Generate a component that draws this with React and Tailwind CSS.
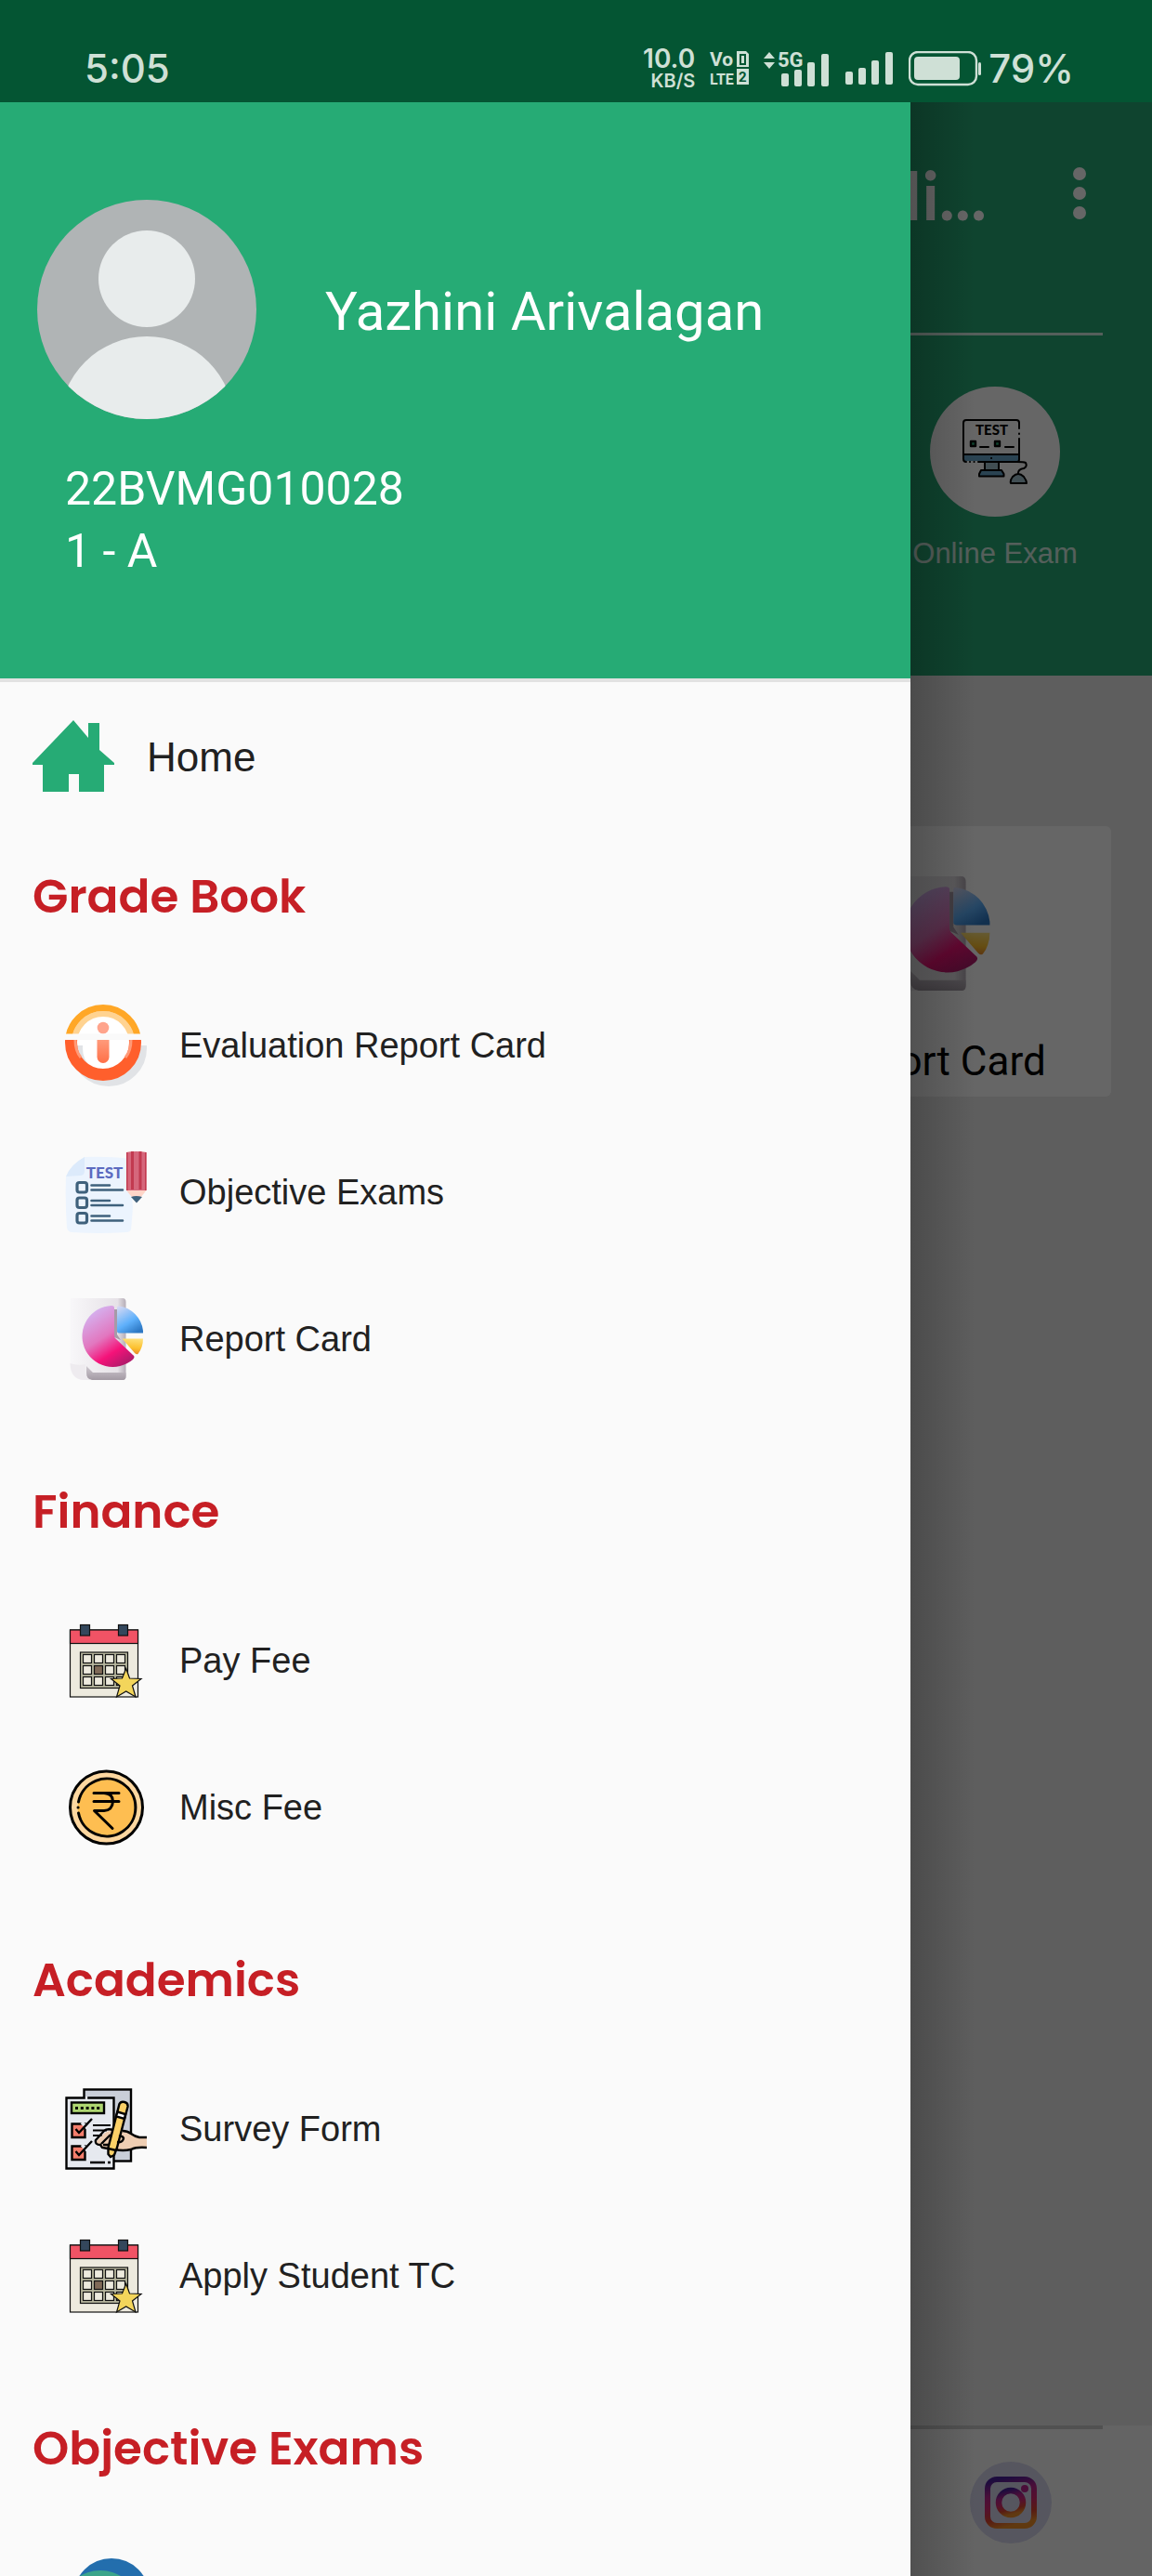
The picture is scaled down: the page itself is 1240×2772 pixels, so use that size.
import { useState } from "react";

function HomeIcon() {
  return (
    <svg viewBox="0 0 88 88" className="size-[88px] shrink-0" fill="#26ab75">
      <path d="M44 4 L60 23 V7 H72 V36 L88 50 V52 H77 V81 H50 V62 H39 V81 H11 V52 H0 V50 Z" />
    </svg>
  );
}

function InfoIcon() {
  return (
    <svg viewBox="0 0 88 88" className="size-[88px] shrink-0">
      <defs>
        <linearGradient id="stem" x1="0" y1="0" x2="0" y2="1">
          <stop offset="0" stopColor="#ff9a7b" />
          <stop offset="1" stopColor="#ff7048" />
        </linearGradient>
        <clipPath id="top">
          <rect width="88" height="31.5" />
        </clipPath>
        <clipPath id="bottom">
          <rect y="38" width="88" height="50" />
        </clipPath>
        <clipPath id="shade">
          <rect y="44" width="88" height="44" />
        </clipPath>
      </defs>
      <circle cx="41" cy="41" r="34" fill="#fff" />
      <circle cx="47" cy="47" r="34.5" fill="none" stroke="#e1e3e6" strokeWidth="13" clipPath="url(#shade)" />
      <path d="M0 31.5 H82 V38 H0 Z" fill="#fafafa" />
      <g clipPath="url(#top)" fill="none">
        <circle cx="41" cy="41" r="31" stroke="#ffd391" strokeWidth="6" />
        <circle cx="41" cy="41" r="37.5" stroke="#ffa726" strokeWidth="7" />
      </g>
      <g clipPath="url(#bottom)" fill="none">
        <circle cx="41" cy="41" r="34.5" stroke="#ff5f2c" strokeWidth="13" />
        <path d="M11 38 Q11 50 17 57" stroke="#ff9a78" strokeWidth="3" />
        <path d="M71 38 Q71 50 65 57" stroke="#ff9a78" strokeWidth="3" />
      </g>
      <circle cx="41" cy="25" r="6.3" fill="#ffa48c" />
      <path d="M34.5 38 H47.5 V56.5 A6.5 6.5 0 0 1 34.5 56.5 Z" fill="url(#stem)" />
    </svg>
  );
}

function TestPaperIcon() {
  return (
    <svg viewBox="0 0 88 88" className="size-[88px] shrink-0">
      <path d="M21 6 Q45 5 73 8 Q71 45 73 60 Q72 74 71 84 Q70 87 66 87 Q36 89 8 87 Q3 87 2 82 Q0 55 1 27 Z" fill="#ecf4fe" />
      <path d="M21 6 V21 Q21 26 16 26 L1 27 Q6 14 21 6 Z" fill="#dceafb" />
      <text x="42.5" y="28.5" textAnchor="middle" fontFamily="Lato, sans-serif" fontWeight="900" fontSize="17" fill="#5c6bc0">
        TEST
      </text>
      {[0, 16.5, 33].map((dy) => (
        <g key={dy} fill="none" stroke="#3f617c" strokeLinecap="round">
          <rect x="13" y={33.5 + dy} width="10.5" height="10.5" rx="2.5" strokeWidth="3.2" />
          <path d={`M28.5 ${36.5 + dy} H48 M28.5 ${41.5 + dy} H62`} strokeWidth="2.6" />
        </g>
      ))}
      <path d="M66 1 Q76 -1 87.5 1 V42 L77 55 L66 42 Z" fill="#ffd5c8" />
      <path d="M66 1 Q76 -1 87.5 1 V42 H66 Z" fill="#d5677c" />
      <path d="M71 0 h3 v41 h-3z M79.5 0 h3 v41 h-3z M66 1 h1.5 v41 h-1.5z M86 1 h1.5 v41 h-1.5z" fill="#c23a50" />
      <path d="M71 49 Q76.5 47 83 49 L77 55.5 Z" fill="#3f617c" />
    </svg>
  );
}

function PieReportIcon({ className }) {
  return (
    <svg viewBox="0 0 88 88" className={className}>
      <defs>
        <linearGradient id="paper" x1="0" y1="0" x2="1" y2="0">
          <stop offset="0" stopColor="#f8f7f9" />
          <stop offset="0.85" stopColor="#e6e2e7" />
          <stop offset="1" stopColor="#b5adb7" />
        </linearGradient>
        <linearGradient id="fold" x1="0" y1="0" x2="0" y2="1">
          <stop offset="0" stopColor="#cfc9d0" />
          <stop offset="1" stopColor="#a39aa4" />
        </linearGradient>
        <linearGradient id="pink" x1="0.2" y1="0.1" x2="0.7" y2="1">
          <stop offset="0" stopColor="#d5b0ee" />
          <stop offset="0.45" stopColor="#e277bf" />
          <stop offset="0.75" stopColor="#f51279" />
          <stop offset="1" stopColor="#b51a6c" />
        </linearGradient>
        <linearGradient id="blue" x1="0.1" y1="0" x2="0.7" y2="1">
          <stop offset="0" stopColor="#d5d8f3" />
          <stop offset="0.6" stopColor="#5eb0fb" />
          <stop offset="1" stopColor="#2d78c4" />
        </linearGradient>
        <linearGradient id="amber" x1="0.6" y1="0" x2="0.5" y2="1">
          <stop offset="0" stopColor="#fde07a" />
          <stop offset="0.6" stopColor="#fcc02e" />
          <stop offset="1" stopColor="#e8862a" />
        </linearGradient>
      </defs>
      <path d="M8 0 H62 Q65.5 0 65.5 4 V84 Q65.5 88 62 88 H20 Q6 87 5.5 72 V3 Q5.5 0 8 0 Z" fill="url(#paper)" />
      <path d="M23 73 L30 80 H65.5 V84 Q65.5 88 62 88 H29 Q23 88 23 80 Z" fill="url(#fold)" />
      <path d="M5.5 70 Q14 73 22 71 V80 Q23 87 29 88 H20 Q6 87 5.5 70 Z" fill="#eeebef" />
      <path d="M53 12 L56 12 V39 L60 45 L53 42 Z" fill="#a79aa8" />
      <path d="M53 10 Q53 8 50 8 A33 33 0 1 0 73 66 Q76 63 73 61 L54 43 Q53 42 53 40 Z" fill="url(#pink)" />
      <path d="M56 10 Q56 8 58 8.5 A30 30 0 0 1 84 35 V37.5 H58 Q56 37.5 56 35.5 Z" fill="url(#blue)" />
      <path d="M61.5 43.5 H84 Q84 53 78.5 60 Q77 61 75 59 Z" fill="url(#amber)" />
    </svg>
  );
}

function CalendarIcon() {
  return (
    <svg viewBox="0 0 88 88" className="size-[88px] shrink-0" stroke="#111" strokeWidth="1.2">
      <rect x="5.5" y="11" width="73" height="72" fill="#edeade" />
      <rect x="5.5" y="11" width="73" height="14.5" fill="#f05365" />
      <rect x="16.5" y="5.5" width="10" height="11.5" fill="#34475c" />
      <rect x="57.5" y="5.5" width="10" height="11.5" fill="#34475c" />
      <rect x="16.5" y="35" width="51" height="38.5" fill="#b9b8a0" />
      {[37.5, 49.5, 61.5].map((y) =>
        [19.5, 31.5, 43.5, 55.5].map((x) => (
          <rect
            key={`${x}-${y}`}
            x={x}
            y={y}
            width="9"
            height="9"
            fill={x === 31.5 && y === 49.5 ? "#806a58" : "#edeade"}
          />
        ))
      )}
      <path
        d="M65.7 52.5 L69.5 63 L82 63.5 L72.5 71 L76 83 L65.7 77 L55.5 83 L59 71 L49.5 63.5 L61.5 63 Z"
        fill="#f3d55b"
      />
    </svg>
  );
}

function RupeeIcon() {
  return (
    <svg viewBox="0 0 88 88" className="size-[88px] shrink-0" fill="none" stroke="#000" strokeWidth="3" strokeLinecap="round" strokeLinejoin="round">
      <circle cx="44.5" cy="44" r="39" fill="#fdd7a0" />
      <circle cx="44.5" cy="44" r="31" fill="#febe51" stroke="none" />
      <path d="M14.5 38 A31 31 0 1 1 14.5 50" />
      <path d="M14 44 h0.1" />
      <path d="M31 28.5 H58 M31 37.5 H58 M31 28.5 H42 Q51.5 29 51.5 37.5 Q51 47 42 47.5 H31.5 L51 66.5" />
    </svg>
  );
}

function SurveyIcon() {
  return (
    <svg viewBox="0 0 88 88" className="size-[88px] shrink-0" fill="none" stroke="#000" strokeWidth="2.4">
      <rect x="20.5" y="1.5" width="50.5" height="77" fill="#c9ced8" />
      <path d="M1.5 10.5 H52.5 V86.5 H1.5 Z" fill="#e6e9ef" />
      <path d="M23 9 V12" stroke="#e6e9ef" />
      <rect x="7" y="15.5" width="35" height="11.5" fill="#aed671" />
      <path d="M11 21.5 H38" strokeWidth="3" strokeDasharray="3 2.8" />
      <path d="M7.5 38.5 H21.5 V53 H7.5 Z M7.5 62.5 H21.5 V77 H7.5 Z" fill="#f47e6c" />
      <path d="M18 37 L24 43 M18 61 L24 67" stroke="#e6e9ef" strokeWidth="3.5" />
      <path d="M11.5 44 L15 48 L29 33 M11.5 68 L15 72 L29 57" />
      <path d="M30 40 H49 M30 45.5 H45 M30 51 H40" strokeWidth="1.9" />
      <path d="M27 80 H43 M46 80 H49" />
      <path
        d="M89 53 H80 Q75 52 71 49 L64 46 H50 Q44 46 40 51 L33 58 Q34 62 39 61 L40 65 Q58 68 69 67 Q76 64 89 64 Z"
        fill="#efceb3"
        stroke="none"
      />
      <path d="M88 53 H80 Q75 52 71 49 Q67 46 62 46 M88 64 Q77 63 71 66 Q62 68 54 66 M46 65 L40 64 L38 61 Q32 61 33 56 L42 46 Q45 43 52 45 M39 60 L49 50 M41 61 H47" />
      <path d="M58.5 17 Q60 14 64 15 Q68 16 67.5 20 L56 64 L53 72 L49 74 L46.5 71 L46.5 64 Z" fill="#fbd067" />
      <path d="M56.5 25.5 L65 28 L64 33 L55 30.5 Z" fill="#fff" />
      <path d="M46.5 65 L55 67 M56 58 Q62 59 63 54 Q62 51 58 52" />
    </svg>
  );
}

function GlobeIcon() {
  return (
    <svg viewBox="0 0 88 88" className="size-[88px] shrink-0">
      <defs>
        <clipPath id="globe">
          <circle cx="50" cy="43" r="41" />
        </clipPath>
      </defs>
      <circle cx="50" cy="43" r="41" fill="#236ead" />
      <ellipse cx="38" cy="44" rx="36" ry="29" fill="#3ba58b" clipPath="url(#globe)" />
    </svg>
  );
}

function OnlineExamIcon() {
  return (
    <svg viewBox="0 0 70 70" className="size-[70px]" fill="none" stroke="#000" strokeWidth="2" strokeLinecap="round" strokeLinejoin="round">
      <path d="M1 38 H61 V45 H1 Z" fill="#69a9cc" stroke="none" />
      <path d="M61 10 V4 Q61 1 58 1 H4 Q1 1 1 4 V43 Q1 46 4 46 M17 46 H59 Q61 46 61 43 V21 M61 15.5 V16 M8 46 h0.1 M12.5 46 h0.1 M1 38 H61" />
      <path d="M31 42 h0.1" />
      <path d="M24 46 H39 V55 H24 Z" fill="#a3c3d0" />
      <path d="M20 55 H42 L44.5 59 V61.5 H18 V59 Z" fill="#69a9cc" />
      <path d="M52 69 Q51 66 54 62 Q60 56 66 62 Q69 66 69 69 Z" fill="#a3c3d0" />
      <path d="M60 58 Q60 54 66 53 Q70 51 68 47 Q66 46 59 46" />
      <path d="M9 24 h5 v5 h-5z M35 24 h5 v5 h-5z" fill="#26ab75" strokeWidth="2.4" />
      <path d="M19 30 H28 M46 30 H55" />
      <text x="31.5" y="17" textAnchor="middle" fontFamily="Lato, sans-serif" fontWeight="900" fontSize="15" fill="#000" stroke="none">
        TEST
      </text>
    </svg>
  );
}

function InstagramIcon() {
  return (
    <svg viewBox="0 0 88 88" className="size-[88px]" fill="none">
      <defs>
        <linearGradient id="insta" x1="0.25" y1="0" x2="0.5" y2="1">
          <stop offset="0" stopColor="#4a1f9c" />
          <stop offset="0.3" stopColor="#b8258f" />
          <stop offset="0.55" stopColor="#d52a72" />
          <stop offset="0.8" stopColor="#dc4630" />
          <stop offset="1" stopColor="#f0902a" />
        </linearGradient>
      </defs>
      <circle cx="44" cy="44" r="44" fill="#d7d7ee" />
      <rect x="19" y="19" width="50" height="50" rx="10" stroke="url(#insta)" strokeWidth="6" />
      <circle cx="44" cy="44" r="13" stroke="url(#insta)" strokeWidth="6.5" />
      <circle cx="59" cy="29" r="4" fill="#b8258f" />
    </svg>
  );
}

function VolteIcon() {
  return (
    <svg viewBox="0 0 42 38" className="h-[38px] w-[42px] overflow-visible" fill="#cfe0d6" fontFamily="Roboto, sans-serif" fontWeight="700">
      <text x="0" y="16" fontSize="21">Vo</text>
      <text x="0" y="36" fontSize="16">LTE</text>
      <path d="M29 0 H39 L42 3 V17 H29 Z M29 19 H42 V36 H29 Z" />
      <rect x="33" y="4" width="5" height="10" fill="none" stroke="#045533" strokeWidth="2" />
      <text x="31" y="33" fontSize="15" fill="#045533">2</text>
    </svg>
  );
}

function SignalBars() {
  return (
    <svg viewBox="0 0 52 36" className="h-[36px] w-[52px]" fill="#cfe0d6">
      <rect x="0" y="21" width="8" height="14" rx="2" />
      <rect x="14" y="17" width="8" height="18" rx="2" />
      <rect x="28" y="9" width="8" height="26" rx="2" />
      <rect x="43" y="0" width="8" height="35" rx="2" />
    </svg>
  );
}

function FiveGSignal() {
  return (
    <svg viewBox="0 0 72 38" className="h-[38px] w-[72px] overflow-visible" fill="#cfe0d6">
      <path d="M0 8 L6 1 L12 8 Z M0 12 H12 L6 19 Z" />
      <text x="15" y="17" fontFamily="Roboto, sans-serif" fontWeight="700" fontSize="22">
        5G
      </text>
      <rect x="19" y="24" width="8" height="14" rx="2" />
      <rect x="33" y="20" width="8" height="18" rx="2" />
      <rect x="47" y="12" width="8" height="26" rx="2" />
      <rect x="62" y="3" width="8" height="35" rx="2" />
    </svg>
  );
}

function BatteryIcon() {
  return (
    <svg viewBox="0 0 78 38" className="h-[38px] w-[78px]">
      <rect x="1" y="1" width="72" height="35" rx="9" fill="none" stroke="#cfe0d6" strokeWidth="2.4" />
      <rect x="6" y="6" width="49" height="25" rx="4" fill="#cfe0d6" />
      <rect x="75" y="12" width="3" height="14" rx="1.5" fill="#cfe0d6" />
    </svg>
  );
}

const groups = [
  {
    title: "Grade Book",
    items: [
      { label: "Evaluation Report Card", icon: <InfoIcon /> },
      { label: "Objective Exams", icon: <TestPaperIcon /> },
      { label: "Report Card", icon: <PieReportIcon className="size-[88px] shrink-0" /> },
    ],
  },
  {
    title: "Finance",
    items: [
      { label: "Pay Fee", icon: <CalendarIcon /> },
      { label: "Misc Fee", icon: <RupeeIcon /> },
    ],
  },
  {
    title: "Academics",
    items: [
      { label: "Survey Form", icon: <SurveyIcon /> },
      { label: "Apply Student TC", icon: <CalendarIcon /> },
    ],
  },
  {
    title: "Objective Exams",
    items: [{ label: "", icon: <GlobeIcon /> }],
  },
];

function StatusBar() {
  return (
    <div className="flex h-[110px] shrink-0 items-end justify-between bg-[#045533] pr-[84px] pb-2 pl-[91px] font-[Inter,sans-serif] text-[#cfe0d6]">
      <span className="text-[42px] leading-[56px] font-medium">5:05</span>
      <div className="flex h-14 items-center gap-4">
        <div className="text-right font-semibold">
          <div className="text-[28px] leading-[26px]">10.0</div>
          <div className="text-[20px] leading-[22px]">KB/S</div>
        </div>
        <VolteIcon />
        <FiveGSignal />
        <SignalBars />
        <BatteryIcon />
        <span className="-ml-2 text-[42px] leading-[56px] font-medium">79%</span>
      </div>
    </div>
  );
}

function Dashboard() {
  return (
    <main className="flex h-full flex-col bg-[#ebebeb]">
      <header className="h-[617px] shrink-0 bg-[#26ab75]">
        <div className="mx-[53px] flex h-[251px] items-start justify-end gap-[75px] border-b-3 border-white/80 pt-[54px]">
          <h1 className="font-[Lato,sans-serif] text-[72px] leading-[90px] font-bold text-white">Hi...</h1>
          <button aria-label="More options" className="flex w-[50px] flex-col items-center gap-[7px] pt-4">
            <span className="size-[14px] rounded-full bg-white" />
            <span className="size-[14px] rounded-full bg-white" />
            <span className="size-[14px] rounded-full bg-white" />
          </button>
        </div>
        <div className="mr-[69px] flex justify-end pt-[55px]">
          <a href="#online-exam" className="flex w-[200px] flex-col items-center">
            <span className="flex size-[140px] items-center justify-center rounded-full bg-white">
              <OnlineExamIcon />
            </span>
            <span className="mt-5 font-['Liberation_Sans',sans-serif] text-[31px] leading-[40px] whitespace-nowrap text-white/80">
              Online Exam
            </span>
          </a>
        </div>
      </header>

      <section className="grid flex-1 grid-cols-3 content-start gap-[15px] px-[44px] pt-[162px]">
        <a href="#report-card" className="col-start-3 flex h-[291px] flex-col items-center rounded-md bg-white pt-[54px]">
          <PieReportIcon className="size-[123px]" />
          <span className="mt-[50px] font-[Roboto,sans-serif] text-[44px] leading-[52px] text-black">Report Card</span>
        </a>
      </section>

      <footer className="h-[162px] shrink-0 bg-[#fafafa]">
        <div className="mx-[53px] h-1 bg-[#cbcbcb]" />
        <div className="flex justify-end pt-[35px] pr-[108px]">
          <a href="#instagram" aria-label="Instagram">
            <InstagramIcon />
          </a>
        </div>
      </footer>
    </main>
  );
}

function Drawer() {
  return (
    <aside className="absolute inset-y-0 right-[260px] left-0 overflow-hidden bg-[#fafafa]">
      <div className="h-[624px] border-b-4 border-[#e2e2e2] bg-[#26ab75] pt-[105px] font-[Roboto,sans-serif] text-white">
        <div className="flex items-center gap-[74px] pl-[40px]">
          <svg viewBox="0 0 236 236" className="size-[236px] shrink-0">
            <defs>
              <clipPath id="avatar">
                <circle cx="118" cy="118" r="118" />
              </clipPath>
            </defs>
            <g clipPath="url(#avatar)">
              <rect width="236" height="236" fill="#b0b4b5" />
              <circle cx="118" cy="85" r="52" fill="#e8ecec" />
              <circle cx="118" cy="241" r="94" fill="#e8ecec" />
            </g>
          </svg>
          <h2 className="pt-1 text-[58px] leading-[68px]">Yazhini Arivalagan</h2>
        </div>
        <div className="pt-[42px] pl-[70px] text-[50px] leading-[67px]">
          <p>22BVMG010028</p>
          <p>1 - A</p>
        </div>
      </div>

      <nav className="font-['Liberation_Sans',sans-serif] text-[#212121]">
        <a href="#home" className="flex h-[162px] items-center gap-[35px] pl-[35px] text-[44px]">
          <HomeIcon />
          Home
        </a>
        {groups.map((group) => (
          <section key={group.title} className="pb-[38px]">
            <h3 className="pt-[33px] pb-[45px] pl-[35px] font-[Poppins,Inter,sans-serif] text-[50px] leading-[72px] font-semibold text-[#c61f25]">
              {group.title}
            </h3>
            {group.items.map((item, i) => (
              <a
                key={i}
                href="#item"
                className="flex h-[158px] items-center gap-[35px] pl-[70px] text-[38px]"
              >
                {item.icon}
                {item.label}
              </a>
            ))}
          </section>
        ))}
      </nav>
    </aside>
  );
}

function App() {
  const [open, setOpen] = useState(true);

  return (
    <div className="flex h-screen flex-col overflow-hidden">
      <StatusBar />
      <div className="relative min-h-0 flex-1">
        <Dashboard />
        {open && (
          <>
            <button
              aria-label="Close menu"
              className="absolute inset-0 bg-black/60"
              onClick={() => setOpen(false)}
            />
            {/* drawer edge shadow */}
            <div className="pointer-events-none absolute inset-y-0 right-[190px] w-[70px] bg-linear-to-r from-black/20 to-transparent" />
            <Drawer />
          </>
        )}
      </div>
    </div>
  );
}

export default App;
